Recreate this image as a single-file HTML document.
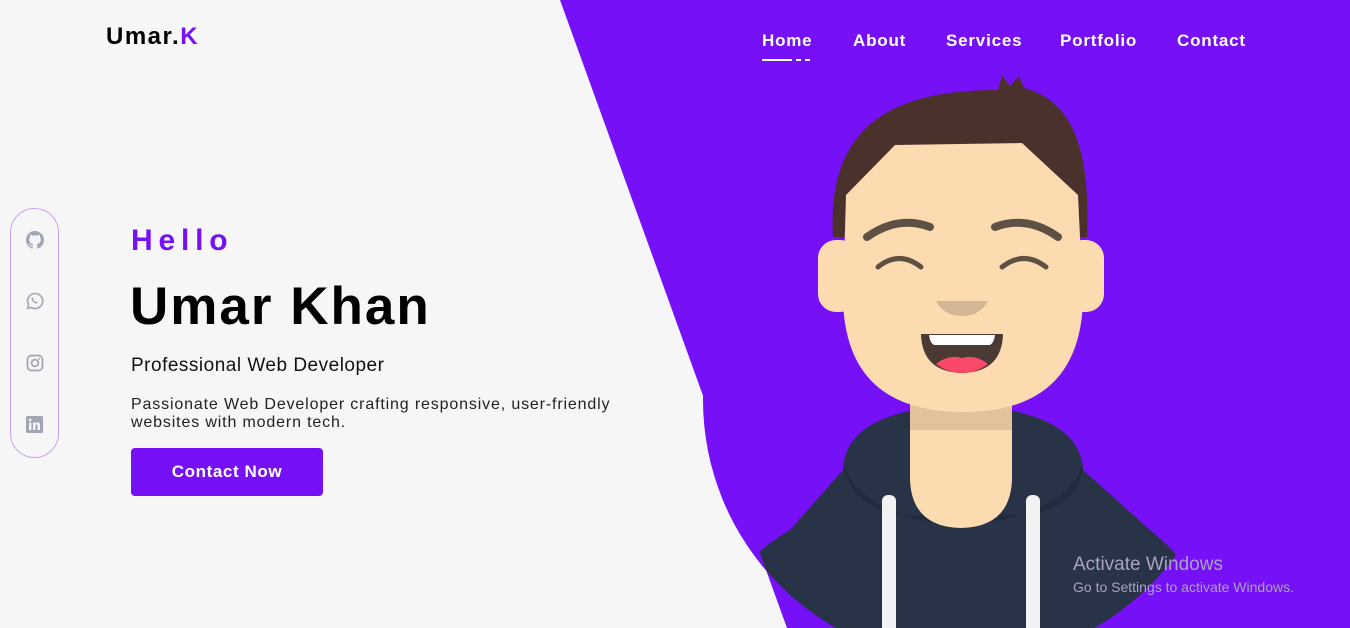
<!DOCTYPE html>
<html><head><meta charset="utf-8"><style>
*{margin:0;padding:0;box-sizing:border-box}
html,body{width:1350px;height:628px;overflow:hidden}
body{background:#f6f6f6;font-family:"Liberation Sans",sans-serif;position:relative}
.abs{position:absolute}
.logo{left:106px;top:23px;font-size:24px;font-weight:bold;color:#000;letter-spacing:1.5px}
.logo span{color:#7510f7}
.nav a{position:absolute;top:31px;color:#fff;font-weight:bold;font-size:17px;text-decoration:none;letter-spacing:0.8px}
.social{left:10px;top:208px;width:49px;height:250px;border:1px solid #c9a2f7;border-radius:25px}
.hello{left:131px;top:224px;font-size:30px;font-weight:bold;color:#7510f7;letter-spacing:5.8px}
.name{left:130px;top:276px;font-size:53px;font-weight:900;color:#000;letter-spacing:2px}
.prof{left:131px;top:355px;font-size:19px;color:#111;letter-spacing:0.5px}
.desc{left:131px;top:396px;font-size:16px;line-height:18px;color:#222;width:500px;letter-spacing:0.85px}
.btn{left:131px;top:448px;width:192px;height:48px;background:#7510f7;border-radius:4px;color:#fff;font-weight:bold;font-size:17px;text-align:center;line-height:48px;letter-spacing:0.6px}
.win{left:1073px;top:554px;color:#a9a2c4;font-size:19px}
.win2{left:1073px;top:579px;color:#a9a2c4;font-size:14px}
</style></head><body>
<svg class="abs" style="left:0;top:0;display:block" width="1350" height="628" viewBox="0 0 1350 628">
<defs><clipPath id="c"><circle cx="965" cy="400" r="262"/></clipPath><clipPath id="p"><polygon points="560,0 1350,0 1350,628 787,628"/></clipPath></defs>
<polygon points="560,0 1350,0 1350,628 787,628" fill="#7510f7"/>
<circle cx="965" cy="400" r="262" fill="#7510f7"/>
<g clip-path="url(#p)"><g clip-path="url(#c)">
<!-- hoodie -->
<path d="M700,640 L720,600 Q740,560 790,530 L843,470 Q845,410 960,405 Q1080,410 1083,470 L1150,530 Q1200,570 1230,640 Z" fill="#283347"/>
<path d="M843,465 Q850,505 900,515 L1030,515 Q1080,505 1083,465 Q1060,520 960,525 Q866,520 843,465Z" fill="#222b3d"/>
<rect x="882" y="495" width="14" height="140" rx="6" fill="#f2f2f2"/>
<rect x="1026" y="495" width="14" height="140" rx="6" fill="#f2f2f2"/>
</g></g>
<!-- neck -->
<path d="M910,390 L1012,390 L1012,480 Q1010,527 961,528 Q912,527 910,480 Z" fill="#fddbb1"/>
<rect x="910" y="395" width="102" height="35" fill="#e3c19a"/>
<!-- ears -->
<rect x="818" y="240" width="40" height="72" rx="18" fill="#fddbb1"/>
<rect x="1064" y="240" width="40" height="72" rx="18" fill="#fddbb1"/>
<!-- hair -->
<path d="M833,237 C826,120 900,90 998,90 L1002,75 L1010,86 L1019,76 L1024,88 C1078,102 1090,160 1087,237 Z" fill="#4b312c"/>
<!-- face -->
<path d="M846,195 L895,145 L1022,143 L1078,195 L1083,300 Q1080,412 963,412 Q846,412 843,300 Z" fill="#fddbb1"/>
<!-- brows -->
<path d="M867,237 Q898,215 930,227" stroke="#5e5143" stroke-width="8" fill="none" stroke-linecap="round"/>
<path d="M995,227 Q1027,215 1058,237" stroke="#5e5143" stroke-width="8" fill="none" stroke-linecap="round"/>
<!-- eyes -->
<path d="M878,267 Q899,250 921,267" stroke="#5e5143" stroke-width="5" fill="none" stroke-linecap="round"/>
<path d="M1002,267 Q1024,250 1046,267" stroke="#5e5143" stroke-width="5" fill="none" stroke-linecap="round"/>
<!-- nose -->
<path d="M936,301 L988,301 Q980,316 962,316 Q944,316 936,301Z" fill="#d3b693"/>
<!-- mouth -->
<path d="M921,334 L1003,334 Q1002,372 962,373 Q922,372 921,334Z" fill="#4a3a33"/>
<path d="M929,335 L995,335 Q994,343 990,345 L934,345 Q930,343 929,335Z" fill="#fff"/>
<path d="M936,364 Q948,354 962,358 Q976,354 988,364 Q976,373 962,373 Q948,373 936,364Z" fill="#f94868"/>
</svg>
<div class="abs logo">Umar.<span>K</span></div>
<div class="nav">
<a style="left:762px">Home</a>
<a style="left:853px">About</a>
<a style="left:946px">Services</a>
<a style="left:1060px">Portfolio</a>
<a style="left:1177px">Contact</a>
</div>
<div class="abs" style="left:762px;top:59px;width:30px;height:2px;background:#fff"></div>
<div class="abs" style="left:796px;top:59px;width:5px;height:2px;background:#fff"></div>
<div class="abs" style="left:805px;top:59px;width:5px;height:2px;background:#fff"></div>
<div class="abs social"></div>
<svg class="abs" style="left:26px;top:231px" width="18" height="18" viewBox="0 0 16 16"><path fill="#a0a6b4" d="M8 0C3.58 0 0 3.58 0 8c0 3.54 2.290 6.53 5.47 7.59.4.07.55-.17.55-.38v-1.34c-2.230.48-2.7-1.07-2.7-1.07-.36-.92-.89-1.170-.89-1.17-.73-.5.06-.49.06-.49.8.06 1.23.83 1.23.83.72 1.23 1.88.87 2.34.67.07-.52.28-.87.51-1.07-1.78-.2-3.64-.89-3.64-3.950 0-.87.31-1.59.82-2.15-.08-.2-.36-1.020.08-2.12 0 0 .67-.21 2.2.82a7.6 7.6 0 0 1 4 0c1.53-1.04 2.2-.82 2.2-.82.44 1.1.16 1.92.08 2.12.51.56.82 1.27.82 2.15 0 3.07-1.87 3.75-3.65 3.95.29.25.54.73.54 1.48v2.2c0 .21.15.46.55.38A8 8 0 0 0 16 8c0-4.42-3.58-8-8-8z"/></svg>
<svg class="abs" style="left:26px;top:292px" width="18" height="18" viewBox="0 0 18 18"><path d="M9 1.5a7.5 7.5 0 0 0-6.4 11.3L1.6 16.4l3.7-1A7.5 7.5 0 1 0 9 1.5z" fill="none" stroke="#a0a6b4" stroke-width="1.6"/><path d="M6.3 5.5c.5-.3 1 .2 1.2.8.2.5-.5.9-.3 1.3.5 1 1.3 1.8 2.3 2.3.4.2.8-.5 1.3-.3.6.2 1.1.7.8 1.2-.4.8-1.4 1-2.3.6-1.7-.8-3-2.1-3.7-3.7-.4-.9-.1-1.8.7-2.200z" fill="#a0a6b4"/></svg>
<svg class="abs" style="left:26px;top:354px" width="18" height="18" viewBox="0 0 18 18"><rect x="1.5" y="1.5" width="15" height="15" rx="4" fill="none" stroke="#a0a6b4" stroke-width="1.7"/><circle cx="9" cy="9" r="3.4" fill="none" stroke="#a0a6b4" stroke-width="1.7"/><circle cx="13.2" cy="4.8" r="1" fill="#a0a6b4"/></svg>
<svg class="abs" style="left:26px;top:416px" width="17" height="17" viewBox="0 0 17 17"><rect width="17" height="17" rx="1.5" fill="#a0a6b4"/><rect x="3" y="6.5" width="2.4" height="7.5" fill="#f6f6f6"/><circle cx="4.2" cy="4" r="1.4" fill="#f6f6f6"/><path d="M7 6.5h2.3v1.1c.5-.8 1.3-1.3 2.4-1.3 1.8 0 2.3 1.2 2.3 3V14h-2.4v-4.2c0-.9-.3-1.4-1-1.4-.8 0-1.2.6-1.2 1.4V14H7z" fill="#f6f6f6"/></svg>
<div class="abs hello">Hello</div>
<div class="abs name">Umar Khan</div>
<div class="abs prof">Professional Web Developer</div>
<div class="abs desc">Passionate Web Developer crafting responsive, user-friendly websites with modern tech.</div>
<div class="abs btn">Contact Now</div>
<div class="abs win">Activate Windows</div>
<div class="abs win2">Go to Settings to activate Windows.</div>
</body></html>
